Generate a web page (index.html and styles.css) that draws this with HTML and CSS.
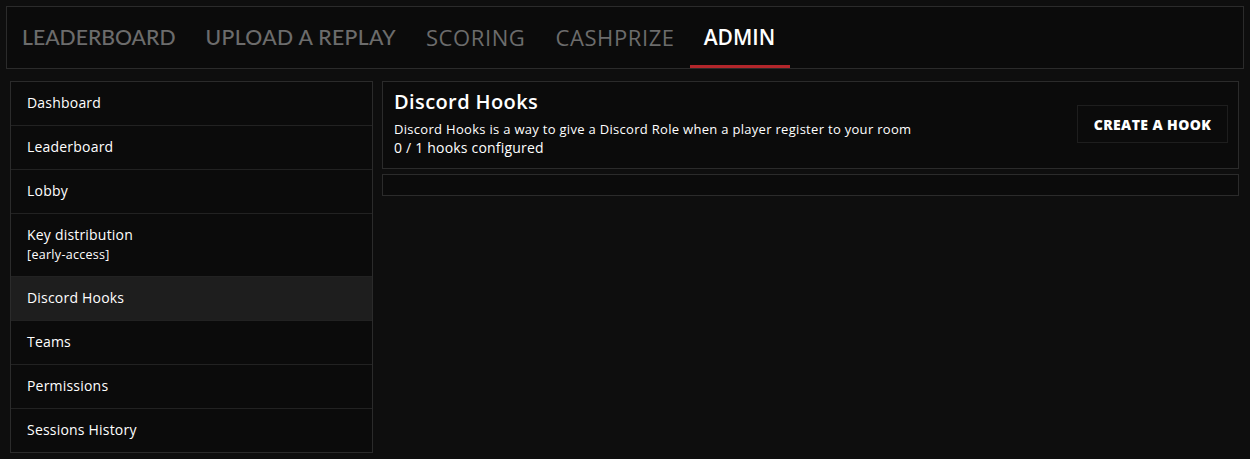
FILE: index.html
```html
<!DOCTYPE html>
<html lang="en">
<head>
    <meta charset="UTF-8">
    <title>Admin - Discord Hooks</title>
    <link rel="stylesheet" href="styles.css">
</head>
<body>
    <header class="topbar">
        <nav class="tabs">
            <a class="tab tab-old" href="#">Leaderboard</a>
            <a class="tab tab-old wide" href="#">Upload a replay</a>
            <a class="tab" href="#">Scoring</a>
            <a class="tab" href="#">Cashprize</a>
            <a class="tab active" href="#">Admin</a>
        </nav>
    </header>

    <div class="admin">
        <aside class="side-menu">
            <a class="side-item" href="#">Dashboard</a>
            <a class="side-item" href="#">Leaderboard</a>
            <a class="side-item" href="#">Lobby</a>
            <a class="side-item tall" href="#">Key distribution<span class="tag">[early-access]</span></a>
            <a class="side-item current" href="#">Discord Hooks</a>
            <a class="side-item" href="#">Teams</a>
            <a class="side-item" href="#">Permissions</a>
            <a class="side-item" href="#">Sessions History</a>
        </aside>

        <main class="content">
            <section class="panel hooks-head">
                <div class="hooks-info">
                    <h1>Discord Hooks</h1>
                    <p class="desc">Discord Hooks is a way to give a Discord Role when a player register to your room</p>
                    <p class="count">0 / 1 hooks configured</p>
                </div>
                <button class="btn-create">Create a hook</button>
            </section>
            <section class="panel hooks-list"></section>
        </main>
    </div>
</body>
</html>
```

FILE: styles.css
```css
body {
    margin: 0;
    padding: 6px;
    background-color: #0e0e0e;
    color: #fff;
    font-family: 'Open Sans', sans-serif;
}

.topbar {
    background-color: #0b0b0b;
    border: 1px solid #2b2b2b;
    height: 61px;
}

.tabs {
    display: flex;
    height: 100%;
}

.tab {
    display: flex;
    align-items: center;
    padding: 0 15px;
    padding-top: 1px;
    color: #6c6c6c;
    text-decoration: none;
    text-transform: uppercase;
    font-size: 22px;
    font-weight: 500;
    letter-spacing: 0.6px;
    border-bottom: 3px solid transparent;
}

.tab-old {
    font-family: 'Lato', sans-serif;
    font-size: 21.2px;
    letter-spacing: 0;
}

.tab-old.wide {
    letter-spacing: 0.35px;
}

.tab.active {
    color: #fff;
    font-weight: 600;
    font-size: 21px;
    letter-spacing: 0;
    padding-left: 14px;
    border-bottom-color: #b3262b;
}

.admin {
    display: flex;
    gap: 9px;
    margin: 12px 5px 0 4px;
    align-items: flex-start;
}

.side-menu {
    width: 361px;
    flex-shrink: 0;
    display: flex;
    flex-direction: column;
    background-color: #0b0b0b;
    border: 1px solid #2b2b2b;
}

.side-item {
    display: flex;
    flex-direction: column;
    justify-content: center;
    box-sizing: border-box;
    height: 44px;
    padding: 0 16px 2px;
    color: #fff;
    text-decoration: none;
    font-size: 14px;
    font-weight: 500;
    letter-spacing: 0.2px;
    border-top: 1px solid #222;
}

.side-item:first-child {
    border-top: none;
    height: 43px;
}

.side-item.tall {
    height: 63px;
    padding-bottom: 2px;
}

.side-item.current {
    background-color: #1e1e1e;
}

.tag {
    font-size: 12.5px;
    letter-spacing: 0.3px;
    line-height: 16px;
    margin-top: 3px;
}

.content {
    flex: 1;
    display: flex;
    flex-direction: column;
    gap: 5px;
}

.panel {
    background-color: #0b0b0b;
    border: 1px solid #2b2b2b;
}

.hooks-head {
    display: flex;
    justify-content: space-between;
    align-items: center;
    padding: 6px 10px 12px 11px;
    height: 68px;
}

.hooks-info h1 {
    margin: 0 0 5px 0;
    font-size: 20px;
    font-weight: 600;
    letter-spacing: 0.4px;
}

.hooks-info p {
    margin: 0;
    font-weight: 400;
}

.desc {
    font-size: 13px;
    letter-spacing: 0.3px;
}

.count {
    font-size: 14px;
    letter-spacing: 0.2px;
    margin-top: 1px;
}

.btn-create {
    background-color: #0b0b0b;
    border: 1px solid #1e1e1e;
    color: #fff;
    font-family: 'Open Sans', sans-serif;
    font-weight: 800;
    font-size: 14px;
    letter-spacing: 0.4px;
    text-transform: uppercase;
    width: 151px;
    height: 38px;
    margin-top: 4px;
}

.hooks-list {
    height: 20px;
}
```
